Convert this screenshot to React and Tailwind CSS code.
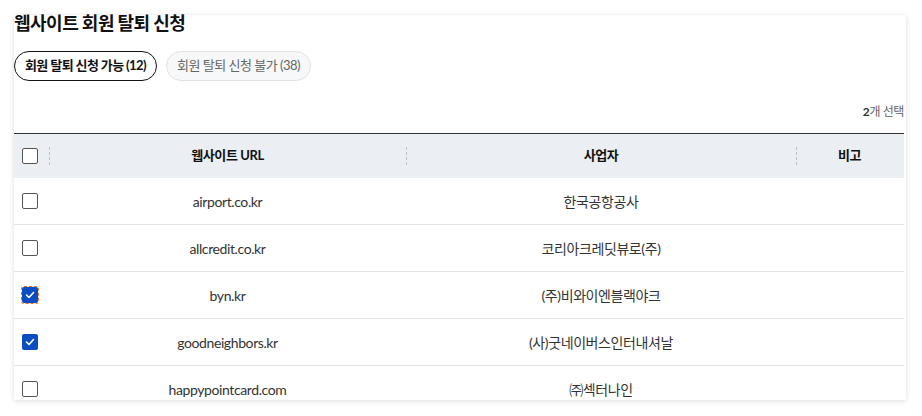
import React from 'react';

const rows = [
    { url: 'airport.co.kr', company: '한국공항공사', checked: false },
    { url: 'allcredit.co.kr', company: '코리아크레딧뷰로(주)', checked: false },
    { url: 'byn.kr', company: '(주)비와이엔블랙야크', checked: true, focused: true },
    { url: 'goodneighbors.kr', company: '(사)굿네이버스인터내셔날', checked: true },
    { url: 'happypointcard.com', company: '㈜섹터나인', checked: false },
];

const Checkbox = ({ checked, focused }) => (
    <span className={`flex items-center justify-center ${focused ? 'outline-1 outline-dashed outline-[#f06a1d] outline-offset-0 rounded-[2px]' : ''}`}>
        {checked ? (
            <span className="flex items-center justify-center w-4 h-4 rounded-[2px] bg-[#0b4dc2]">
                <svg width="10" height="8" viewBox="0 0 10 8" fill="none">
                    <polyline points="1.5,4 4,6.5 8.5,1.5" stroke="white" strokeWidth="1.6" strokeLinecap="round" strokeLinejoin="round" />
                </svg>
            </span>
        ) : (
            <span className="w-4 h-4 rounded-[2px] border border-[#555] bg-white" />
        )}
    </span>
);

const Divider = () => (
    <span className="absolute left-0 top-1/2 -translate-y-1/2 h-[18px] border-l border-dashed border-[#b7c1cc]" />
);

const cols = 'grid grid-cols-[35px_357px_390px_107px]';

const App = () => {
    return (
        <div className="w-[922px] h-[416px] bg-white overflow-hidden pt-[15px] pl-[14px]" style={{ fontFamily: 'Lato, "Noto Sans CJK KR", sans-serif' }}>
            <div className="w-[892px] h-[385px] bg-white shadow-[0_1px_5px_rgba(0,0,0,0.14)] flex flex-col pr-[2px]">
                <h1 className="-mt-[6px] text-[18px] leading-[26px] font-bold text-[#111] tracking-[-0.5px]" style={{ fontFamily: '"Noto Sans CJK KR", sans-serif' }}>
                    웹사이트 회원 탈퇴 신청
                </h1>

                <div className="flex-1 overflow-hidden">
                    <div className="flex gap-[9px] mt-[16px]">
                        <button className="h-[30px] px-[10px] rounded-full border border-[#111] bg-white text-[13px] font-bold text-[#111] tracking-[-0.6px]">
                            회원 탈퇴 신청 가능 (12)
                        </button>
                        <button className="h-[30px] px-[10px] rounded-full border border-[#e2e2e2] bg-[#f7f8f9] text-[13px] text-[#666] tracking-[-0.5px]">
                            회원 탈퇴 신청 불가 (38)
                        </button>
                    </div>

                    <div className="flex justify-end mt-[21px] text-[12px] leading-[20px] text-[#666] tracking-[-0.4px]">
                        <span><b className="text-[#333]">2</b>개 선택</span>
                    </div>

                    <div className="mt-[11px] border-t border-[#333]">
                        <div className={`${cols} h-[44px] bg-[#ebeef2] text-[13px] font-bold text-[#111] tracking-[-0.4px]`}>
                            <div className="flex items-center pl-[8px]">
                                <Checkbox checked={false} />
                            </div>
                            <div className="relative flex items-center justify-center"><Divider />웹사이트 URL</div>
                            <div className="relative flex items-center justify-center"><Divider />사업자</div>
                            <div className="relative flex items-center justify-center"><Divider />비고</div>
                        </div>

                        {rows.map((row, i) => (
                            <div key={i} className={`${cols} h-[47px] border-b border-[#e3e3e3] text-[14px] text-[#333] tracking-[-0.4px]`}>
                                <div className="flex items-center pl-[8px]">
                                    <Checkbox checked={row.checked} focused={row.focused} />
                                </div>
                                <div className="flex items-center justify-center">{row.url}</div>
                                <div className="flex items-center justify-center">{row.company}</div>
                                <div />
                            </div>
                        ))}
                    </div>
                </div>
            </div>
        </div>
    );
};

export default App;
